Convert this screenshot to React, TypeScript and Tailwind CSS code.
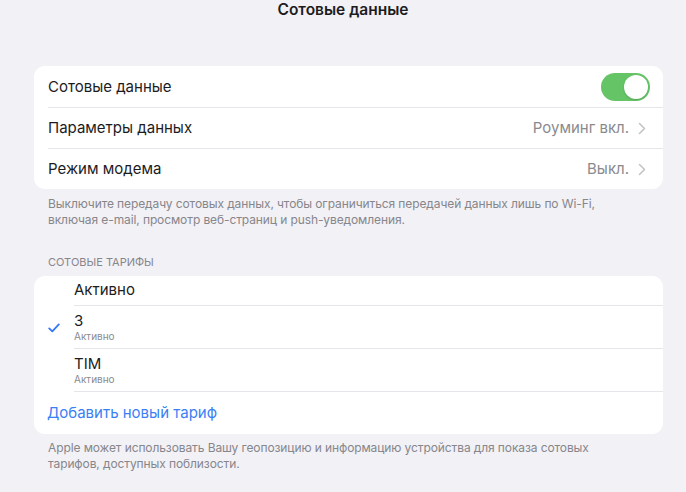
import React from "react";

function Chevron() {
  return (
    <svg width="8" height="13" viewBox="0 0 8 13" className="ml-[9px]">
      <path d="M1.5 1.5 L6.5 6.5 L1.5 11.5" fill="none" stroke="#c4c4c7" strokeWidth="1.6" strokeLinecap="round" strokeLinejoin="round" />
    </svg>
  );
}

function Check() {
  return (
    <svg width="12" height="10" viewBox="0 0 12 10">
      <path d="M1.2 5.4 L4.3 8.4 L10.8 1.4" fill="none" stroke="#3478f6" strokeWidth="1.8" strokeLinecap="round" strokeLinejoin="round" />
    </svg>
  );
}

export default function App() {
  return (
    <div
      className="w-[686px] h-[492px] bg-[#f2f1f6] overflow-hidden text-[#1c1c1e]"
      style={{ fontFamily: "Inter, 'Noto Sans', sans-serif" }}
    >
      <div className="h-[22px] text-center text-[15.5px] font-semibold leading-[20px]">
        Сотовые данные
      </div>

      <div className="mx-[34px] mt-[44px] w-[629px] bg-white rounded-[11px] overflow-hidden">
        <div className="h-[41px] pl-[14px] flex items-center">
          <div className="flex-1 text-[15px] pt-[1px]">Сотовые данные</div>
          <div className="w-[49px] h-[28px] rounded-full bg-[#65c466] mr-[13px] flex items-center justify-end pr-[2px]">
            <div className="w-[24px] h-[24px] rounded-full bg-white shadow-[0_1px_2px_rgba(0,0,0,0.15)]" />
          </div>
        </div>
        <div className="ml-[14px] h-px bg-[#e6e6ea]" />
        <div className="h-[40px] pl-[14px] pr-[17px] flex items-center">
          <div className="flex-1 text-[15px]">Параметры данных</div>
          <div className="text-[15px] text-[#8a8a8e]">Роуминг вкл.</div>
          <Chevron />
        </div>
        <div className="ml-[14px] h-px bg-[#e6e6ea]" />
        <div className="h-[40px] pl-[14px] pr-[17px] flex items-center">
          <div className="flex-1 text-[15px]">Режим модема</div>
          <div className="text-[15px] text-[#8a8a8e]">Выкл.</div>
          <Chevron />
        </div>
      </div>

      <div className="mx-[48px] mt-[7px] text-[12px] leading-[16px] text-[#86868b] tracking-[-0.1px]">
        Выключите передачу сотовых данных, чтобы ограничиться передачей данных лишь по Wi-Fi,
        <br />
        включая e-mail, просмотр веб-страниц и push-уведомления.
      </div>

      <div className="mx-[48px] mt-[27px] text-[11px] leading-[14px] text-[#86868b] uppercase">
        Сотовые тарифы
      </div>

      <div className="mx-[34px] mt-[7px] w-[629px] bg-white rounded-[11px] overflow-hidden">
        <div className="h-[29px] pl-[40px] flex items-center">
          <div className="text-[15px]">Активно</div>
        </div>
        <div className="ml-[40px] h-px bg-[#e6e6ea]" />
        <div className="h-[42px] flex items-center">
          <div className="w-[40px] pl-[14px] pt-[2px]">
            <Check />
          </div>
          <div className="flex flex-col">
            <div className="text-[15px] leading-[18px]">3</div>
            <div className="text-[10px] leading-[13px] text-[#8a8a8e]">Активно</div>
          </div>
        </div>
        <div className="ml-[40px] h-px bg-[#e6e6ea]" />
        <div className="h-[42px] pl-[40px] flex items-center">
          <div className="flex flex-col">
            <div className="text-[15px] leading-[18px]">TIM</div>
            <div className="text-[10px] leading-[13px] text-[#8a8a8e]">Активно</div>
          </div>
        </div>
        <div className="ml-[40px] h-px bg-[#e6e6ea]" />
        <div className="h-[42px] pl-[13px] flex items-center">
          <div className="text-[15px] text-[#3a80f4]">Добавить новый тариф</div>
        </div>
      </div>

      <div className="mx-[48px] mt-[6px] text-[12px] leading-[16px] text-[#86868b] tracking-[-0.1px]">
        Apple может использовать Вашу геопозицию и информацию устройства для показа сотовых
        <br />
        тарифов, доступных поблизости.
      </div>
    </div>
  );
}
